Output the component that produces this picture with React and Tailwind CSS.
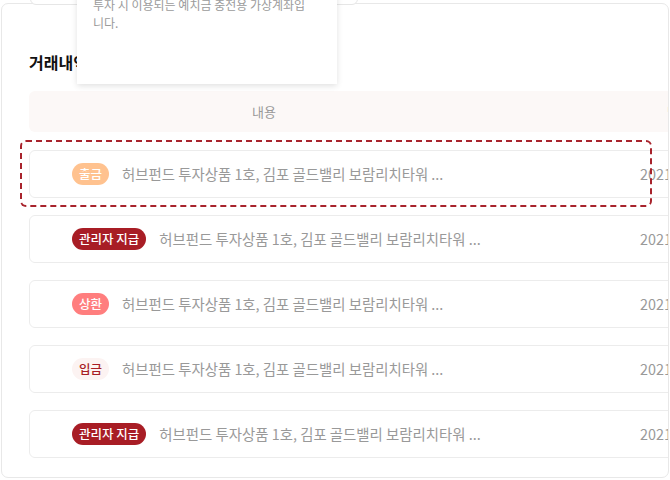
import React from 'react';

const rows = [
  { type: '출금', badge: 'bg-[#ffc28f] text-white' },
  { type: '관리자 지급', badge: 'bg-[#a81d25] text-white' },
  { type: '상환', badge: 'bg-[#ff7e7e] text-white' },
  { type: '입금', badge: 'bg-[#fcf3f2] text-[#a81d25]' },
  { type: '관리자 지급', badge: 'bg-[#a81d25] text-white' },
];

const title = '허브펀드 투자상품 1호, 김포 골드밸리 보람리치타워 ...';

const App = () => {
  return (
    <div
      className="relative w-[670px] h-[480px] overflow-hidden bg-white"
      style={{ fontFamily: '"Noto Sans CJK KR", "Noto Sans", sans-serif' }}
    >
      {/* box above, scrolled off */}
      <div className="absolute left-[30px] top-[-20px] w-[328px] h-[25px] border border-[#e6e6e6] rounded-[6px] bg-white z-10" />

      {/* Card */}
      <div className="mt-[3px] mx-[1px] h-[475px] border border-[#e8e8e8] rounded-[7px] overflow-hidden pl-[27px] pt-[46px]">
        <h2 className="text-[16px] leading-[24px] font-bold text-[#111]">거래내역</h2>

        <div className="w-[820px] mt-[17px]">
          {/* Header */}
          <div className="flex items-center h-[41px] bg-[#fcf8f7] rounded-[6px] text-[13px] text-[#999]">
            <div className="w-[470px] text-center">내용</div>
            <div className="w-[168px]" />
            <div>날짜</div>
          </div>

          {/* Rows */}
          <div className="flex flex-col gap-[17px] mt-[18px]">
            {rows.map((row, i) => (
              <div key={i} className="flex items-center h-[48px] border border-[#ececec] rounded-[6px] bg-white">
                <div className="w-[610px] flex items-center pl-[42px]">
                  <span className={`h-[22px] px-[7px] rounded-full text-[12.5px] font-medium flex items-center ${row.badge}`}>
                    {row.type}
                  </span>
                  <span className="ml-[13px] text-[14.4px] text-[#999]">{title}</span>
                </div>
                <div className="text-[14.4px] text-[#999]">2021.08.12</div>
              </div>
            ))}
          </div>
        </div>
      </div>

      {/* Dashed highlight */}
      <div className="absolute left-[20px] top-[140px] w-[632px] h-[67px] border-2 border-dashed border-[#a8232c] rounded-[6px]" />

      {/* Tooltip */}
      <div className="absolute left-[77px] top-[-20px] w-[260px] bg-white pl-[16px] pr-[24px] pt-[16px] pb-[52px] shadow-[0_2px_6px_rgba(0,0,0,0.12)] z-20">
        <p className="text-[12px] leading-[18px] text-[#9b9b9b]">투자 시 이용되는 예치금 충전용 가상계좌입니다.</p>
      </div>
    </div>
  );
};

export default App;
